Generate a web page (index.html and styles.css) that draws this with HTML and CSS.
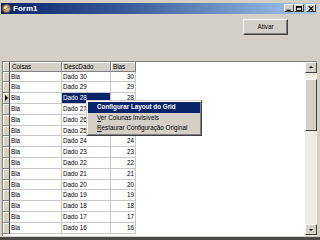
FILE: index.html
```html
<!DOCTYPE html>
<html lang="pt">
<head>
    <meta charset="UTF-8">
    <title>Form1</title>
    <link rel="stylesheet" href="styles.css">
</head>
<body>

<div class="window">
    <div class="titlebar">
        <svg class="app-icon" width="9" height="9" viewBox="0 0 9 9">
            <circle cx="4.5" cy="4.5" r="4" fill="#c8a070" stroke="#6a4a2a" stroke-width="0.8"/>
            <circle cx="4" cy="4" r="2" fill="#e8d8b0"/>
            <path d="M1.5 6.5 L7.5 2.5" stroke="#8a5a30" stroke-width="0.8"/>
        </svg>
        <span class="title">Form1</span>
        <div class="title-buttons">
            <div class="tbtn"><svg width="6" height="5" viewBox="0 0 6 5"><rect x="0.5" y="3.6" width="4" height="1.4" fill="#000"/></svg></div>
            <div class="tbtn"><svg width="6" height="5" viewBox="0 0 6 5"><rect x="0.5" y="0.5" width="5" height="4" fill="none" stroke="#000" stroke-width="1"/><rect x="0.5" y="0.5" width="5" height="1.3" fill="#000"/></svg></div>
            <div class="tbtn close"><svg width="6" height="5" viewBox="0 0 6 5"><path d="M0.8 0.3 L5.2 4.7 M5.2 0.3 L0.8 4.7" stroke="#000" stroke-width="1.1"/></svg></div>
        </div>
    </div>

    <div class="panel">
        <button class="btn">Ativar</button>
    </div>

    <div class="gridbox">
        <div class="grid" id="grid">
            <div class="row head">
                <div class="ind"></div>
                <div class="cell">Coisas</div>
                <div class="cell">DescDado</div>
                <div class="cell">Blas</div>
            </div>
        </div>
        <div class="vscroll">
            <div class="sb-btn"><span class="arrow up"></span></div>
            <div class="thumb"></div>
            <div class="track"></div>
            <div class="sb-btn"><span class="arrow down"></span></div>
        </div>
    </div>
    <div class="footer"></div>

    <div class="menu">
        <div class="item active"><b>Configurar Layout do Grid</b></div>
        <div class="item"><u>V</u>er Colunas Invisíveis</div>
        <div class="item"><u>R</u>estaurar Configuração Original</div>
    </div>
</div>

<script>
    // linhas do grid: Dado 30 ate Dado 16
    const grid = document.getElementById('grid');
    for (let n = 30; n >= 16; n--) {
        const row = document.createElement('div');
        row.className = 'row';
        const sel = n === 28;
        row.innerHTML =
            '<div class="ind">' + (sel ? '<span class="pointer"></span>' : '') + '</div>' +
            '<div class="cell">Bla</div>' +
            '<div class="cell' + (sel ? ' selected' : '') + '">Dado ' + n + '</div>' +
            '<div class="cell num">' + n + '</div>';
        grid.appendChild(row);
    }
</script>

</body>
</html>
```

FILE: styles.css
```css
body {
    margin: 0;
    padding: 0;
    font-family: "Liberation Sans", Arial, sans-serif;
    font-size: 6.3px;
    color: #000;
}
.window {
    position: relative;
    width: 320px;
    height: 240px;
    background-color: #d4d0c8;
    display: flex;
    flex-direction: column;
    overflow: hidden;
}
.titlebar {
    height: 11px;
    margin: 3px 3px 0 1px;
    padding: 0 1px;
    background: linear-gradient(90deg, #0a246a 0%, #3a5a9a 40%, #a6caf0 100%);
    display: flex;
    align-items: center;
}
.app-icon {
    margin-right: 2px;
}
.title {
    color: #fff;
    font-weight: bold;
    font-size: 8px;
}
.title-buttons {
    margin-left: auto;
    display: flex;
}
.tbtn {
    width: 10px;
    height: 8px;
    box-sizing: border-box;
    background-color: #d4d0c8;
    border: 1px solid;
    border-color: #fff #404040 #404040 #fff;
    display: flex;
    align-items: center;
    justify-content: center;
}
.tbtn.close {
    margin-left: 2px;
}
.panel {
    height: 47px;
    box-sizing: border-box;
    padding: 5px 32px 0 0;
    display: flex;
    justify-content: flex-end;
    align-items: flex-start;
}
.btn {
    width: 45px;
    height: 16px;
    padding: 0;
    font-family: "Liberation Sans", Arial, sans-serif;
    font-size: 6.3px;
    color: #000;
    background-color: #d4d0c8;
    border: 1px solid;
    border-color: #fff #404040 #404040 #fff;
    box-shadow: inset -1px -1px #808080;
}
.gridbox {
    height: 176px;
    margin: 0 3px 0 2px;
    border-top: 1px solid #808080;
    border-left: 1px solid #808080;
    display: flex;
    background-color: #fff;
}
.grid {
    flex: 1;
    overflow: hidden;
}
.row {
    display: grid;
    grid-template-columns: 7px 52px 49px 25px;
    height: 10.8px;
}
.row.head {
    height: 10px;
}
.cell {
    box-sizing: border-box;
    border-right: 1px solid #c8c8c8;
    border-bottom: 1px solid #c8c8c8;
    padding-left: 1px;
    line-height: 9.8px;
    white-space: nowrap;
    overflow: hidden;
}
.cell.num {
    text-align: right;
    padding: 0 1px 0 0;
}
.cell.selected {
    background-color: #0a246a;
    color: #fff;
}
.head .cell {
    background-color: #d4d0c8;
    border-right: 1px solid #808080;
    border-bottom: 1px solid #808080;
    box-shadow: inset 1px 1px #fff;
    padding-left: 2px;
    line-height: 9px;
}
.ind {
    box-sizing: border-box;
    background-color: #d4d0c8;
    border-right: 1px solid #404040;
    border-bottom: 1px solid #808080;
    box-shadow: inset 1px 1px #fff;
    display: flex;
    align-items: center;
    justify-content: center;
}
.pointer {
    width: 0;
    height: 0;
    border-top: 3px solid transparent;
    border-bottom: 3px solid transparent;
    border-left: 3px solid #000;
}
.vscroll {
    width: 12px;
    display: flex;
    flex-direction: column;
    background-color: #eeece7;
}
.sb-btn {
    height: 11px;
    box-sizing: border-box;
    background-color: #d4d0c8;
    border: 1px solid;
    border-color: #fff #404040 #404040 #fff;
    display: flex;
    align-items: center;
    justify-content: center;
}
.sb-btn:last-child {
    margin-bottom: 1px;
}
.arrow {
    width: 0;
    height: 0;
    border-left: 2px solid transparent;
    border-right: 2px solid transparent;
}
.arrow.up {
    border-bottom: 2px solid #000;
}
.arrow.down {
    border-top: 2px solid #000;
}
.thumb {
    height: 52px;
    margin-top: 6px;
    box-sizing: border-box;
    background-color: #d4d0c8;
    border: 1px solid;
    border-color: #fff #404040 #404040 #fff;
}
.track {
    flex: 1;
}
.footer {
    height: 3px;
    border-top: 1px solid #d4d0c8;
    background-color: #4a4a4a;
}
.menu {
    position: absolute;
    left: 86px;
    top: 100px;
    width: 116px;
    box-sizing: border-box;
    padding: 1px;
    background-color: #d4d0c8;
    border: 1px solid;
    border-color: #d4d0c8 #404040 #404040 #d4d0c8;
    box-shadow: inset 1px 1px #fff, inset -1px -1px #808080;
}
.item {
    height: 10.5px;
    line-height: 10.5px;
    padding-left: 9px;
    white-space: nowrap;
}
.item.active {
    background-color: #0a246a;
    color: #fff;
}
```
